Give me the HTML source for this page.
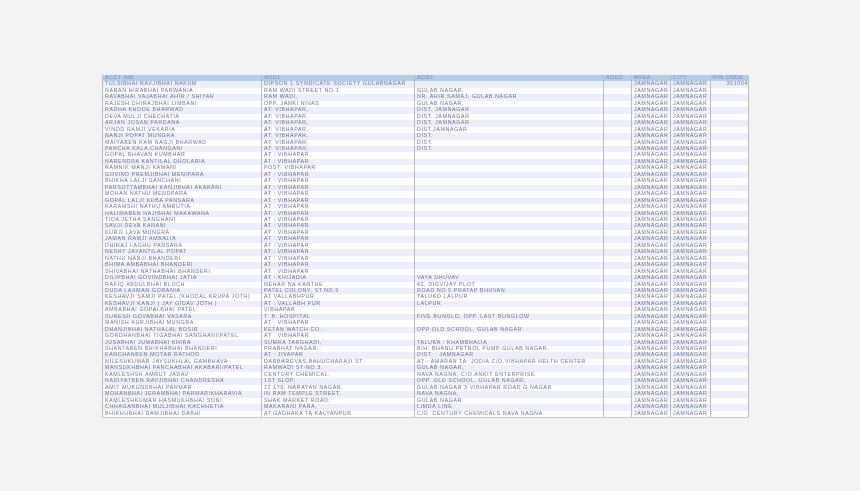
<!DOCTYPE html>
<html><head><meta charset="utf-8"><style>
html,body{margin:0;padding:0;background:#f3f3f5;width:860px;height:491px;overflow:hidden}
table{position:absolute;left:102px;top:75px;width:646px;border-collapse:collapse;table-layout:fixed;font-family:"Liberation Sans",sans-serif;font-size:5.3px;letter-spacing:0.62px;color:#6a7090;filter:blur(0.25px)}
td{height:6.46px;padding:0 0 0 2px;line-height:6.46px;white-space:nowrap;overflow:hidden;border-left:1px solid #b9b9c0;border-right:1px solid #b9b9c0}
tr{height:6.46px}
tr:nth-child(even) td{background:#eceef9}
tr:nth-child(odd) td{background:#ffffff}
tr.h td{background:#b5cbea;color:#7b88a8}
tr:last-child td{border-bottom:1px solid #c8c8d0}
</style></head><body>
<table>
<colgroup><col style="width:159px"><col style="width:153px"><col style="width:189px"><col style="width:28px"><col style="width:39px"><col style="width:40px"><col style="width:38px"></colgroup>
<tr class="h"><td>ACCT NM</td><td>ADD1</td><td>ADD2</td><td>ADD3</td><td>AREA</td><td>CITY</td><td>PIN CODE</td></tr>
<tr><td>TULSIBHAI RAVJIBHAI NAKUM</td><td>DIPSON 1 SYNDICATE SOCIETY GULABNAGAR</td><td></td><td></td><td>JAMNAGAR</td><td>JAMNAGAR</td><td style="text-align:right">361004</td></tr>
<tr><td>NARAN HIRABHAI PARWANIA</td><td>RAM WADI STREET NO.1</td><td>GULAB NAGAR,</td><td></td><td>JAMNAGAR</td><td>JAMNAGAR</td><td></td></tr>
<tr><td>RAVABHAI VAJABHAI AHIR / SHIYAR</td><td>RAM WADI,</td><td>NR. AHIR SAMAJ, GULAB NAGAR</td><td></td><td>JAMNAGAR</td><td>JAMNAGAR</td><td></td></tr>
<tr><td>RAJESH DHIRAJBHAI LIMBANI</td><td>OPP. JANKI NIVAS</td><td>GULAB NAGAR,</td><td></td><td>JAMNAGAR</td><td>JAMNAGAR</td><td></td></tr>
<tr><td>RADHA KHODE BHARWAD</td><td>AT: VIBHAPAR,</td><td>DIST. JAMNAGAR</td><td></td><td>JAMNAGAR</td><td>JAMNAGAR</td><td></td></tr>
<tr><td>DEVA MULJI CHECHATIA</td><td>AT: VIBHAPAR,</td><td>DIST. JAMNAGAR</td><td></td><td>JAMNAGAR</td><td>JAMNAGAR</td><td></td></tr>
<tr><td>ARJAN JOSAN PARDANA</td><td>AT: VIBHAPAR,</td><td>DIST. JAMNAGAR</td><td></td><td>JAMNAGAR</td><td>JAMNAGAR</td><td></td></tr>
<tr><td>VINOD RAMJI VEKARIA</td><td>AT: VIBHAPAR,</td><td>DIST.JAMNAGAR</td><td></td><td>JAMNAGAR</td><td>JAMNAGAR</td><td></td></tr>
<tr><td>NANJI POPAT MUNGRA</td><td>AT: VIBHAPAR,</td><td>DIST.</td><td></td><td>JAMNAGAR</td><td>JAMNAGAR</td><td></td></tr>
<tr><td>MAIYABEN RAM NAGJI BHARWAD</td><td>AT: VIBHAPAR,</td><td>DIST.</td><td></td><td>JAMNAGAR</td><td>JAMNAGAR</td><td></td></tr>
<tr><td>PANCHA KALA CHANGANI</td><td>AT: VIBHAPAR,</td><td>DIST.</td><td></td><td>JAMNAGAR</td><td>JAMNAGAR</td><td></td></tr>
<tr><td>GOPAL BHAVAN KUMBHAR</td><td>AT : VIBHAPAR</td><td></td><td></td><td>JAMNAGAR</td><td>JAMNAGAR</td><td></td></tr>
<tr><td>NARENDRA KANTILAL DHOLARIA</td><td>AT : VIBHAPAR</td><td></td><td></td><td>JAMNAGAR</td><td>JAMNAGAR</td><td></td></tr>
<tr><td>RAMNIK MANJI KAMANI</td><td>POST. VIBHAPAR</td><td></td><td></td><td>JAMNAGAR</td><td>JAMNAGAR</td><td></td></tr>
<tr><td>GOVIND PREMJIBHAI MENIPARA</td><td>AT : VIBHAPAR</td><td></td><td></td><td>JAMNAGAR</td><td>JAMNAGAR</td><td></td></tr>
<tr><td>BHIKHA LALJI SANCHANI</td><td>AT : VIBHAPAR</td><td></td><td></td><td>JAMNAGAR</td><td>JAMNAGAR</td><td></td></tr>
<tr><td>PARSOTTAMBHAI KANJIBHAI AKABARI</td><td>AT : VIBHAPAR</td><td></td><td></td><td>JAMNAGAR</td><td>JAMNAGAR</td><td></td></tr>
<tr><td>MOHAN NATHU MENDPARA</td><td>AT : VIBHAPAR</td><td></td><td></td><td>JAMNAGAR</td><td>JAMNAGAR</td><td></td></tr>
<tr><td>GOPAL LALJI KUBA PANSARA</td><td>AT : VIBHAPAR</td><td></td><td></td><td>JAMNAGAR</td><td>JAMNAGAR</td><td></td></tr>
<tr><td>KARAMSHI NATHU AMRUTIA</td><td>AT : VIBHAPAR</td><td></td><td></td><td>JAMNAGAR</td><td>JAMNAGAR</td><td></td></tr>
<tr><td>HALIMABEN HAJIBHAI MAKAWANA</td><td>AT : VIBHAPAR</td><td></td><td></td><td>JAMNAGAR</td><td>JAMNAGAR</td><td></td></tr>
<tr><td>TIDA JETHA SANGHANI</td><td>AT : VIBHAPAR</td><td></td><td></td><td>JAMNAGAR</td><td>JAMNAGAR</td><td></td></tr>
<tr><td>SAVJI DEVA KANANI</td><td>AT : VIBHAPAR</td><td></td><td></td><td>JAMNAGAR</td><td>JAMNAGAR</td><td></td></tr>
<tr><td>KURJI LAVA MUNGRA</td><td>AT : VIBHAPAR</td><td></td><td></td><td>JAMNAGAR</td><td>JAMNAGAR</td><td></td></tr>
<tr><td>JAMAN RAMJI AMBALIA</td><td>AT : VIBHAPAR</td><td></td><td></td><td>JAMNAGAR</td><td>JAMNAGAR</td><td></td></tr>
<tr><td>DHIRAJ LAGHU PANSARA</td><td>AT : VIBHAPAR</td><td></td><td></td><td>JAMNAGAR</td><td>JAMNAGAR</td><td></td></tr>
<tr><td>NESHT JAYANTILAL POPAT</td><td>AT : VIBHAPAR</td><td></td><td></td><td>JAMNAGAR</td><td>JAMNAGAR</td><td></td></tr>
<tr><td>NATHU NANJI BHANDERI</td><td>AT : VIBHAPAR</td><td></td><td></td><td>JAMNAGAR</td><td>JAMNAGAR</td><td></td></tr>
<tr><td>BHIMA AMBABHAI BHANDERI</td><td>AT : VIBHAPAR</td><td></td><td></td><td>JAMNAGAR</td><td>JAMNAGAR</td><td></td></tr>
<tr><td>SHIVABHAI NATHABHAI BHANDERI</td><td>AT : VIBHAPAR</td><td></td><td></td><td>JAMNAGAR</td><td>JAMNAGAR</td><td></td></tr>
<tr><td>DILIPBHAI GOVINDBHAI JATIA</td><td>AT : KHIJADIA</td><td>VAYA DHUVAV</td><td></td><td>JAMNAGAR</td><td>JAMNAGAR</td><td></td></tr>
<tr><td>RAFIQ ABDULBHAI BLOCH</td><td>NEHAR NA KANTHE</td><td>42, DIGVIJAY PLOT</td><td></td><td>JAMNAGAR</td><td>JAMNAGAR</td><td></td></tr>
<tr><td>DUDA LAXMAN GORANIA</td><td>PATEL COLONY, ST.NO.9</td><td>ROAD NO.5 PRATAP BHUVAN</td><td></td><td>JAMNAGAR</td><td>JAMNAGAR</td><td></td></tr>
<tr><td>KESHAVJI SAMJI PATEL (KHODAL KRUPA JOTH)</td><td>AT VALLABHPUR</td><td>TALUKO LALPUR</td><td></td><td>JAMNAGAR</td><td>JAMNAGAR</td><td></td></tr>
<tr><td>KESHAVJI KANJI ( JAY GIDAV JOTH )</td><td>AT : VALLABH PUR</td><td>LALPUR</td><td></td><td>JAMNAGAR</td><td>JAMNAGAR</td><td></td></tr>
<tr><td>AMBABHAI GOPALBHAI PATEL</td><td>VIBHAPAR</td><td></td><td></td><td>JAMNAGAR</td><td>JAMNAGAR</td><td></td></tr>
<tr><td>SURESH GOVABHAI VASARA</td><td>T. B. HOSPITAL</td><td>FIVE BUNGLO, OPP. LAST BUNGLOW</td><td></td><td>JAMNAGAR</td><td>JAMNAGAR</td><td></td></tr>
<tr><td>MANISH KURJIBHAI MUNGRA</td><td>AT : VIBHAPAR</td><td></td><td></td><td>JAMNAGAR</td><td>JAMNAGAR</td><td></td></tr>
<tr><td>DHANJIBHAI NATHALAL BOSIR</td><td>KETAN WATCH CO.</td><td>OPP OLD SCHOOL, GULAB NAGAR</td><td></td><td>JAMNAGAR</td><td>JAMNAGAR</td><td></td></tr>
<tr><td>GORDHANBHAI TIGABHAI SANGHANI/PATEL</td><td>AT : VIBHAPAR</td><td></td><td></td><td>JAMNAGAR</td><td>JAMNAGAR</td><td></td></tr>
<tr><td>JUSABHAI JUMABHAI KHIRA</td><td>SUMRA TARGHADI,</td><td>TALUKA : KHAMBHALIA</td><td></td><td>JAMNAGAR</td><td>JAMNAGAR</td><td></td></tr>
<tr><td>SHANTABEN BHIKHABHAI BHANDERI</td><td>PRABHAT NAGAR,</td><td>B/H. BHANU PETROL PUMP GULAB NAGAR,</td><td></td><td>JAMNAGAR</td><td>JAMNAGAR</td><td></td></tr>
<tr><td>KANCHANBEN MOTAR RATHOD</td><td>AT : JIVAPAR</td><td>DIST. : JAMNAGAR</td><td></td><td>JAMNAGAR</td><td>JAMNAGAR</td><td></td></tr>
<tr><td>NILESHKUMAR JAYSUKHLAL GAMBHAVA</td><td>DARBARGVAS,BAHUCHARAJI ST</td><td>AT - AMARAN TA: JODIA C/O.VIBHAPAR HELTH CENTER</td><td></td><td>JAMNAGAR</td><td>JAMNAGAR</td><td></td></tr>
<tr><td>MANSUKHBHAI PANCHABHAI AKABARI/PATEL</td><td>RAMWADI ST-NO.3,</td><td>GULAB NAGAR,</td><td></td><td>JAMNAGAR</td><td>JAMNAGAR</td><td></td></tr>
<tr><td>KAMLESHSH AMRUT JADAV</td><td>CENTURY CHEMICAL,</td><td>NAVA NAGNA, C/O.ANKIT ENTERPRISE,</td><td></td><td>JAMNAGAR</td><td>JAMNAGAR</td><td></td></tr>
<tr><td>RADIYATBEN RAVJIBHAI CHANDRESHA</td><td>1ST SLOP,</td><td>OPP. OLD SCHOOL, GULAB NAGAR,</td><td></td><td>JAMNAGAR</td><td>JAMNAGAR</td><td></td></tr>
<tr><td>AMIT MUKUNDBHAI PARMAR</td><td>12 170, NARAYAN NAGAR,</td><td>GULAB NAGAR 3 VIBHAPAR ROAD,G.NAGAR</td><td></td><td>JAMNAGAR</td><td>JAMNAGAR</td><td></td></tr>
<tr><td>MOHANBHAI JERAMBHAI PARMAR/KHARAVIA</td><td>IN RAM TEMPLE STREET,</td><td>NAVA NAGNA,</td><td></td><td>JAMNAGAR</td><td>JAMNAGAR</td><td></td></tr>
<tr><td>KAMLESHKUMAR HASMUKHBHAI SONI</td><td>SHAK MARKET ROAD,</td><td>GULAB NAGAR,</td><td></td><td>JAMNAGAR</td><td>JAMNAGAR</td><td></td></tr>
<tr><td>CHHAGANBHAI MULJIBHAI KACHHETIA</td><td>MAKARANI PARA,</td><td>LIMDA LINE,</td><td></td><td>JAMNAGAR</td><td>JAMNAGAR</td><td></td></tr>
<tr><td>BHIKHUBHAI DAMJIBHAI DABHI</td><td>AT:GADHAKA TA:KALYANPUR</td><td>C/O. CENTURY CHEMICALS NAVA NAGNA.</td><td></td><td>JAMNAGAR</td><td>JAMNAGAR</td><td></td></tr>
</table>
</body></html>
